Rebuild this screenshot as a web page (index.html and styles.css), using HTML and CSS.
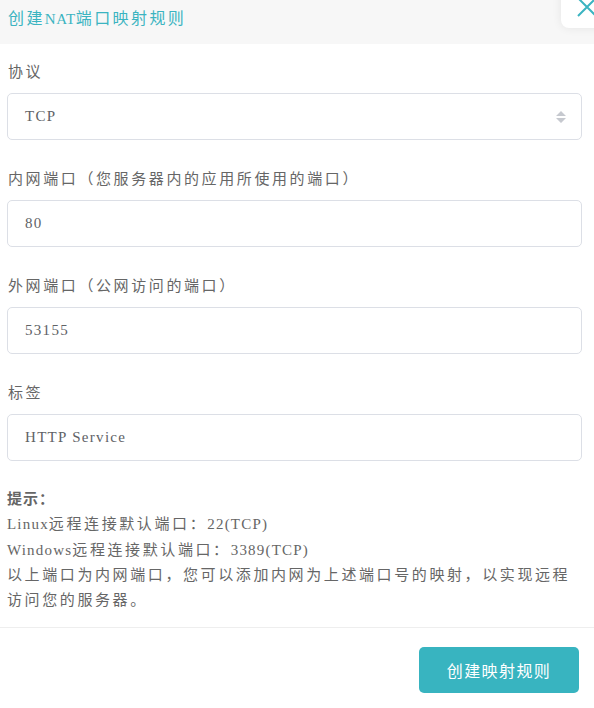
FILE: index.html
```html
<!DOCTYPE html>
<html lang="zh-CN">
<head>
<meta charset="utf-8">
<link rel="stylesheet" href="styles.css">
</head>
<body>
<div class="dialog">
  <div class="header">
    <div class="title">创建<span class="en">NAT</span>端口映射规则</div>
    <div class="close">
      <svg width="24" height="24" viewBox="0 0 24 24"><path d="M3 3 L21 21 M21 3 L3 21" stroke="#3bb4c1" stroke-width="2" fill="none"/></svg>
    </div>
  </div>
  <div class="body">
    <div class="field">
      <div class="label">协议</div>
      <div class="control select">
        <span class="value">TCP</span>
        <svg class="arrows" width="10" height="14" viewBox="0 0 10 14"><path d="M5 1 L10 6 L0 6 Z M5 13 L10 8 L0 8 Z" fill="#c6c9cf"/></svg>
      </div>
    </div>
    <div class="field">
      <div class="label">内网端口（您服务器内的应用所使用的端口）</div>
      <div class="control"><span class="value">80</span></div>
    </div>
    <div class="field">
      <div class="label">外网端口（公网访问的端口）</div>
      <div class="control"><span class="value">53155</span></div>
    </div>
    <div class="field">
      <div class="label">标签</div>
      <div class="control"><span class="value">HTTP Service</span></div>
    </div>
    <div class="tips">
      <div class="tips-title">提示：</div>
      <div><span class="en">Linux</span>远程连接默认端口：<span class="en">22(TCP)</span></div>
      <div><span class="en">Windows</span>远程连接默认端口：<span class="en">3389(TCP)</span></div>
      <div>以上端口为内网端口，您可以添加内网为上述端口号的映射，以实现远程访问您的服务器。</div>
    </div>
  </div>
  <div class="footer">
    <button class="btn">创建映射规则</button>
  </div>
</div>
</body>
</html>
```
FILE: styles.css
```css
html, body {
  margin: 0;
  padding: 0;
  background: #ffffff;
  overflow: hidden;
}
body {
  font-family: "Liberation Serif", "Noto Sans CJK SC", serif;
  color: #666666;
}
.dialog {
  width: 594px;
  height: 708px;
  position: relative;
  overflow: hidden;
}
.en {
  letter-spacing: 1.2px;
  font-size: 15px;
}
.header {
  height: 44px;
  background: #f7f7f7;
  display: flex;
  align-items: center;
  padding-left: 8px;
  position: relative;
}
.title {
  color: #3bb4c1;
  font-size: 16px;
  letter-spacing: 2.4px;
  line-height: 20px;
  margin-top: -7px;
}
.title .en {
  letter-spacing: 0.6px;
}
.close {
  position: absolute;
  left: 561px;
  top: -14px;
  width: 48px;
  height: 42px;
  background: #ffffff;
  border-radius: 8px;
  box-shadow: 0 0 10px rgba(0,0,0,0.08);
  display: flex;
  align-items: flex-end;
  justify-content: flex-start;
}
.close svg {
  margin-left: 14px;
  margin-bottom: 9px;
}
.body {
  padding: 17px 12px 0 7px;
}
.field {
  margin-bottom: 28px;
}
.label {
  font-size: 15px;
  letter-spacing: 2.6px;
  line-height: 22px;
  padding-left: 1px;
  margin-bottom: 10px;
  color: #666666;
}
.control {
  height: 47px;
  box-sizing: border-box;
  border: 1px solid #dcdfe6;
  border-radius: 5px;
  display: flex;
  align-items: center;
  padding: 0 15px 0 17px;
  color: #606266;
  font-size: 15px;
  letter-spacing: 1.3px;
}
.select {
  justify-content: space-between;
}
.tips {
  font-size: 15px;
  letter-spacing: 2.6px;
  line-height: 25.3px;
  color: #666666;
  margin-top: -2px;
  padding-bottom: 14px;
  border-bottom: 1px solid #eeeeee;
  margin-left: -7px;
  margin-right: -12px;
  padding-left: 7px;
  padding-right: 10px;
}
.tips-title {
  font-weight: bold;
  letter-spacing: 1px;
}
.footer {
  display: flex;
  justify-content: flex-end;
  padding: 19px 15px 0 0;
}
.btn {
  width: 160px;
  height: 46px;
  border: none;
  border-radius: 5px;
  background: #38b4c0;
  color: #ffffff;
  font-family: "Liberation Serif", "Noto Sans CJK SC", serif;
  font-size: 16px;
  letter-spacing: 1.4px;
  padding: 0;
}
```
